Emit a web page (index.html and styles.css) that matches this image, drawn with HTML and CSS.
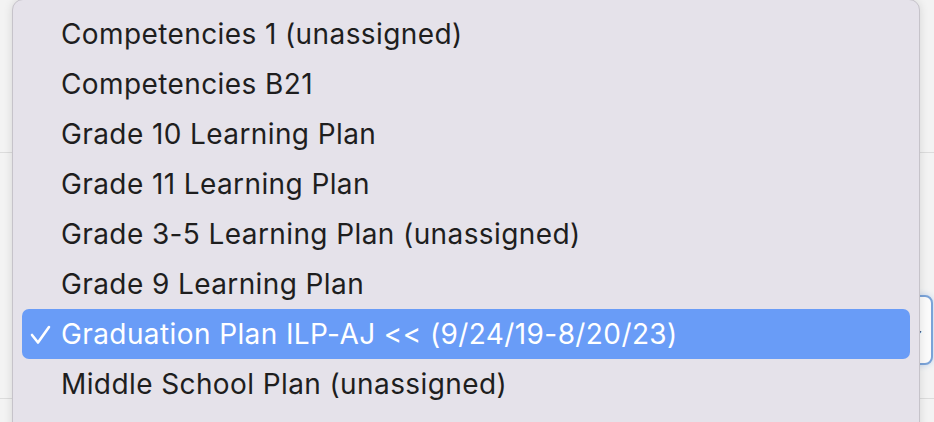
FILE: index.html
```html
<!DOCTYPE html>
<html lang="en">
<head>
    <meta charset="UTF-8">
    <meta name="viewport" content="width=device-width, initial-scale=1.0">
    <title>Plan Select</title>
    <link rel="stylesheet" href="styles.css">
</head>
<body>
    <div class="page">
        <div class="rule"></div>
        <div class="field">
            <div class="select-box">
                <span class="chevron">&#8964;</span>
            </div>
        </div>
        <div class="rule rule-bottom"></div>
    </div>

    <!-- open plan dropdown -->
    <div class="menu">
        <ul class="menu-list">
            <li class="menu-item">Competencies 1 (unassigned)</li>
            <li class="menu-item">Competencies B21</li>
            <li class="menu-item">Grade 10 Learning Plan</li>
            <li class="menu-item">Grade 11 Learning Plan</li>
            <li class="menu-item">Grade 3-5 Learning Plan (unassigned)</li>
            <li class="menu-item">Grade 9 Learning Plan</li>
            <li class="menu-item selected">
                <svg class="check" width="22" height="22" viewBox="0 0 22 22"><polyline points="2,11 8,18.5 19,3" fill="none" stroke="#fff" stroke-width="2.6" stroke-linecap="round" stroke-linejoin="round"/></svg>
                Graduation Plan ILP-AJ &lt;&lt; (9/24/19-8/20/23)
            </li>
            <li class="menu-item">Middle School Plan (unassigned)</li>
            <li class="menu-item">Portfolio Skills and Credits Plan</li>
        </ul>
    </div>
</body>
</html>
```

FILE: styles.css
```css
body { margin: 0; background: #f3f3f3; font-family: Inter, "Noto Sans", sans-serif; overflow: hidden; }
.page { height: 422px; padding-top: 152px; box-sizing: border-box; }
.rule { border-top: 1px solid #dcdcdc; }
.rule-bottom { margin-top: 33px; }
.field { display: flex; justify-content: flex-end; padding-top: 142px; }
.select-box { width: 200px; height: 66px; margin-right: 1px; border: 2px solid #7aa3d8; border-radius: 8px; background: #fbfbfb; box-shadow: 0 0 6px rgba(110, 160, 230, 0.4); display: flex; align-items: center; justify-content: flex-end; padding-right: 8px; }
.chevron { color: #444; font-size: 18px; }

.menu { position: absolute; left: 12px; top: -1px; width: 906px; height: 450px; background: #e5e2ea; border: 1px solid #c6c3ca; border-radius: 11px; box-shadow: 0 0 10px rgba(0, 0, 0, 0.12); }
.menu-list { list-style: none; margin: 0; padding: 9px 9px 0; }
.menu-item { position: relative; height: 50px; line-height: 50px; padding-left: 39px; font-size: 28px; letter-spacing: 0.4px; color: #1e1e1e; border-radius: 7px; white-space: nowrap; }
.menu-item.selected { background: #699cf7; color: #fff; }
.check { position: absolute; left: 8px; top: 15px; }
```
